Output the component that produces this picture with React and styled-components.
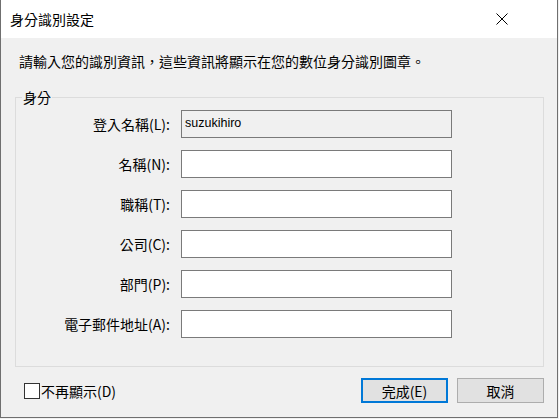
import React from "react";
import styled, { createGlobalStyle } from "styled-components";

const Global = createGlobalStyle`
  html, body { margin: 0; padding: 0; background: #f0f0f0; }
  body { font-family: "Noto Sans", "Noto Sans CJK TC", sans-serif; }
  * { box-sizing: border-box; }
`;

const Window = styled.div`
  width: 558px;
  height: 418px;
  border: 1px solid #6f6f6f;
  border-top: none;
  background: #f0f0f0;
  display: flex;
  flex-direction: column;
  font-family: "Noto Sans", "Noto Sans CJK TC", sans-serif;
  color: #000;
`;

const TitleBar = styled.div`
  height: 38px;
  background: #fff;
  display: flex;
  align-items: center;
  justify-content: space-between;
  padding: 0 0 0 9px;
  flex-shrink: 0;
`;

const Title = styled.div`
  font-size: 14px;
  line-height: 20px;
  font-family: "Noto Sans CJK TC", sans-serif;
  margin-top: -1px;
`;

const CloseButton = styled.div`
  width: 46px;
  height: 38px;
  display: flex;
  align-items: center;
  justify-content: center;
  margin-right: 32px;
`;

const Content = styled.div`
  flex: 1;
  display: flex;
  flex-direction: column;
  padding: 0 13px 0 14px;
`;

const Intro = styled.div`
  font-size: 14px;
  line-height: 20px;
  font-family: "Noto Sans CJK TC", sans-serif;
  margin: 13px 0 0 4px;
`;

const Group = styled.fieldset`
  margin: 17px 0 0 0;
  padding: 4px 0 28px 0;
  border: 1px solid #dcdcdc;
  min-width: 0;
`;

const Legend = styled.legend`
  margin-left: 6px;
  padding: 0 1px;
  font-size: 14px;
  line-height: 18px;
  font-family: "Noto Sans CJK TC", sans-serif;
`;

const Form = styled.div`
  display: grid;
  grid-template-columns: 154px 271px;
  column-gap: 11px;
  row-gap: 12px;
`;

const Label = styled.label`
  display: flex;
  align-items: center;
  justify-content: flex-end;
  height: 28px;
  font-size: 14px;
  line-height: 20px;
  font-family: "Noto Sans CJK TC", sans-serif;
  white-space: nowrap;
`;

const TextBox = styled.input`
  height: 28px;
  width: 271px;
  margin: 0;
  border: 1px solid #7a7a7a;
  background: ${(p) => (p.readOnly ? "#f0f0f0" : "#fff")};
  padding: 0 3px 2px;
  font-family: "Liberation Sans", Arial, sans-serif;
  font-size: 12.5px;
  color: #000;
  outline: none;
  border-radius: 0;
`;

const Footer = styled.div`
  display: flex;
  align-items: center;
  margin-top: 11px;
  padding-left: 9px;
`;

const CheckLabel = styled.label`
  display: flex;
  align-items: center;
  font-size: 14px;
  line-height: 20px;
  font-family: "Noto Sans CJK TC", sans-serif;
  flex: 1;
`;

const Box = styled.span`
  width: 16px;
  height: 16px;
  border: 1px solid #333;
  background: #fff;
  margin-right: 1px;
  display: inline-block;
`;

const Buttons = styled.div`
  display: flex;
  gap: 9px;
`;

const Button = styled.button`
  width: 87px;
  height: 25px;
  margin: 0;
  padding: 0;
  background: #e1e1e1;
  border: ${(p) => (p.primary ? "2px solid #0078d7" : "1px solid #adadad")};
  font-size: 14px;
  line-height: 20px;
  font-family: "Noto Sans CJK TC", sans-serif;
  color: #000;
  border-radius: 0;
`;

const fields = [
  { label: "登入名稱(L):", value: "suzukihiro", readOnly: true },
  { label: "名稱(N):" },
  { label: "職稱(T):" },
  { label: "公司(C):" },
  { label: "部門(P):" },
  { label: "電子郵件地址(A):" },
];

export default function App() {
  return (
    <>
      <Global />
      <Window>
        <TitleBar>
          <Title>身分識別設定</Title>
          <CloseButton>
            <svg width="12" height="12" viewBox="0 0 12 12">
              <path d="M0.5 0.5 L11.5 11.5 M11.5 0.5 L0.5 11.5" stroke="#000" strokeWidth="1" fill="none" />
            </svg>
          </CloseButton>
        </TitleBar>
        <Content>
          <Intro>請輸入您的識別資訊，這些資訊將顯示在您的數位身分識別圖章。</Intro>
          <Group>
            <Legend>身分</Legend>
            <Form>
              {fields.map((f) => (
                <React.Fragment key={f.label}>
                  <Label>{f.label}</Label>
                  <TextBox readOnly={f.readOnly} defaultValue={f.value || ""} />
                </React.Fragment>
              ))}
            </Form>
          </Group>
          <Footer>
            <CheckLabel>
              <Box />
              不再顯示(D)
            </CheckLabel>
            <Buttons>
              <Button primary>完成(E)</Button>
              <Button>取消</Button>
            </Buttons>
          </Footer>
        </Content>
      </Window>
    </>
  );
}
